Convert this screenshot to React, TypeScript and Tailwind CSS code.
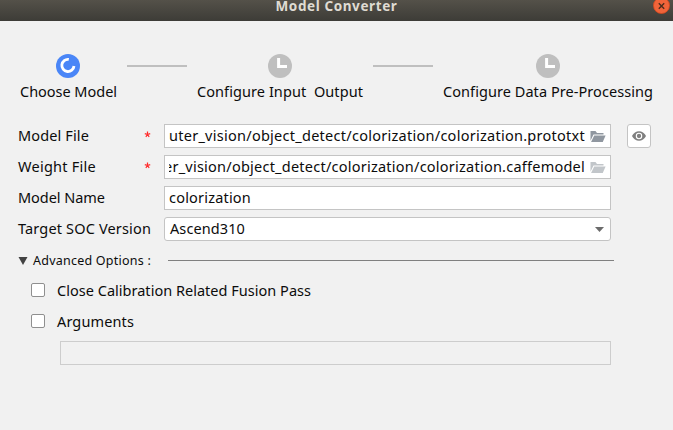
import { useLayoutEffect, useRef } from "react";

type FitProps = { text: string; width: number; className?: string };

/* A single line of text, tracked so that it spans the given width. */
function Fit({ text, width, className = "" }: FitProps) {
  const ref = useRef<HTMLSpanElement>(null);
  useLayoutEffect(() => {
    const el = ref.current;
    if (!el) return;
    el.style.letterSpacing = "0px";
    const natural = el.getBoundingClientRect().width;
    el.style.letterSpacing = `${(width - natural) / text.length}px`;
  }, [text, width]);
  return (
    <span ref={ref} className={`inline-block shrink-0 whitespace-pre ${className}`}>
      {text}
    </span>
  );
}

function ActiveIcon() {
  return (
    <svg width="24" height="24" viewBox="0 0 24 24" fill="none" className="mr-px">
      <circle cx="12" cy="12" r="12" fill="#4a86f7" />
      <path d="M12.8 5.4A6.1 6.1 0 1 0 18 12" stroke="#fff" strokeWidth="2.8" />
    </svg>
  );
}

function PendingIcon() {
  return (
    <svg width="24" height="24" viewBox="0 0 24 24" fill="none">
      <circle cx="12" cy="12" r="12" fill="#bfbfbf" />
      <path d="M10.6 4V12.6H19" stroke="#fff" strokeWidth="3" />
    </svg>
  );
}

function Step({ label, width, active }: { label: string; width: number; active?: boolean }) {
  return (
    <div className="flex shrink-0 flex-col items-center">
      {active ? <ActiveIcon /> : <PendingIcon />}
      <Fit text={label} width={width} className="mb-px mt-[3px] h-5 leading-5" />
    </div>
  );
}

function Folder({ color }: { color: string }) {
  return (
    <svg width="16" height="13" viewBox="0 0 16 13" className="shrink-0" fill={color}>
      <path d="M0.5 1H5.5L7 3H13.5V4.5H3.5L0.5 10.8Z" />
      <path d="M4.2 5.5H15.6L12.8 12H1.1Z" />
    </svg>
  );
}

function Row({ label, width, required, children }: { label: string; width: number; required?: boolean; children: React.ReactNode }) {
  return (
    <div className="flex h-6 items-center">
      <div className="flex w-[146px] shrink-0 items-center">
        <Fit text={label} width={width} className="pb-0.5" />
        {required && (
          <svg width="7" height="7" viewBox="0 0 8 8" className="mb-[3px] ml-auto mr-[13px]" stroke="#ff2a2a" strokeWidth="1.4">
            <path d="M4 4V0.6M4 4L0.9 3M4 4L7.1 3M4 4L2.1 6.8M4 4L5.9 6.8" />
          </svg>
        )}
      </div>
      {children}
    </div>
  );
}

function FileField({ path, width, color }: { path: string; width: number; color: string }) {
  return (
    <div className="flex h-6 w-[447px] items-center border border-[#c4c4c4] bg-white pl-1">
      <div className="flex w-[416px] justify-end overflow-hidden">
        <Fit text={path} width={width} className="pb-0.5" />
      </div>
      <div className="ml-[5px]">
        <Folder color={color} />
      </div>
    </div>
  );
}

function Check({ label, width }: { label: string; width: number }) {
  return (
    <label className="flex h-[31px] items-center">
      <span className="mr-3 h-3.5 w-3.5 rounded-[2px] border border-[#8f8f8f] bg-white" />
      <Fit text={label} width={width} />
    </label>
  );
}

export default function App() {
  return (
    <div className="h-[430px] w-[673px] overflow-hidden bg-[#f1f1f1] font-['Noto_Sans',sans-serif] text-[14.5px] leading-5 text-[#0c0c0c]">
      <header className="relative flex h-[21px] justify-center bg-linear-to-b from-[#545149] to-[#3d3c37]">
        <Fit text="Model Converter" width={122} className="-mt-px h-4 text-[13.5px] leading-[14px] font-bold text-[#dfdbd2]" />
        <svg width="17" height="17" viewBox="0 0 17 17" className="absolute -top-[3px] right-[3px]">
          <circle cx="8.5" cy="8.5" r="8" fill="#f0643a" stroke="#d9481c" strokeWidth="0.8" />
          <path d="M5.8 6.3L11.2 11.7M11.2 6.3L5.8 11.7" stroke="#4a2c1c" strokeWidth="1.4" />
        </svg>
      </header>

      <nav className="flex gap-2.5 pl-5 pt-[33px]">
        <Step label="Choose Model" width={97} active />
        <div className="mt-[11px] h-0.5 w-[60px] shrink-0 bg-[#bfbfbf]" />
        <Step label="Configure Input  Output" width={166} />
        <div className="mt-[11px] h-0.5 w-[60px] shrink-0 bg-[#bfbfbf]" />
        <Step label="Configure Data Pre-Processing" width={210} />
      </nav>

      <main className="pl-[18px] pt-[22px]">
        <div className="flex flex-col gap-[7px]">
          <Row label="Model File" width={71} required>
            <FileField path="uter_vision/object_detect/colorization/colorization.prototxt" width={416} color="#9097a0" />
            <button className="ml-4 flex h-6 w-6 items-center justify-center rounded-[3px] border border-[#c4c4c4] bg-white">
              <svg width="14" height="10" viewBox="0 0 14 10">
                <path d="M0 5C2.8-1.3 11.2-1.3 14 5C11.2 11.3 2.8 11.3 0 5Z" fill="#7f7f7f" />
                <circle cx="7" cy="5" r="2.7" fill="#7f7f7f" stroke="#fff" strokeWidth="1.1" />
              </svg>
            </button>
          </Row>
          <Row label="Weight File" width={78} required>
            <FileField path="er_vision/object_detect/colorization/colorization.caffemodel" width={421} color="#c2c6ca" />
          </Row>
          <Row label="Model Name" width={87}>
            <div className="flex h-6 w-[447px] items-center border border-[#c4c4c4] bg-white pl-1">
              <Fit text="colorization" width={82} className="pb-0.5" />
            </div>
          </Row>
          <Row label="Target SOC Version" width={133}>
            <div className="flex h-6 w-[447px] items-center justify-between rounded-[3px] border border-[#c4c4c4] bg-white pl-[5px] pr-1.5">
              <Fit text="Ascend310" width={75} className="pb-0.5" />
              <svg width="9" height="5" viewBox="0 0 9 5" fill="#6b6b6b">
                <path d="M0 0H9L4.5 5Z" />
              </svg>
            </div>
          </Row>
        </div>

        <div className="mt-2.5 flex h-5 items-center">
          <svg width="10" height="8" viewBox="0 0 10 8" className="mr-[5px]" fill="#424242">
            <path d="M0.5 0H9.5L5 8Z" />
          </svg>
          <Fit text="Advanced Options :" width={118} className="text-[12.5px]" />
          <div className="mb-px ml-[17px] h-px w-[446px] bg-[#808080]" />
        </div>

        <div className="pl-[13px] pt-[3px]">
          <Check label="Close Calibration Related Fusion Pass" width={254} />
          <Check label="Arguments" width={77} />
          <div className="ml-[29px] mt-[5px] h-6 w-[551px] border border-[#cdcdcd]" />
        </div>
      </main>
    </div>
  );
}
